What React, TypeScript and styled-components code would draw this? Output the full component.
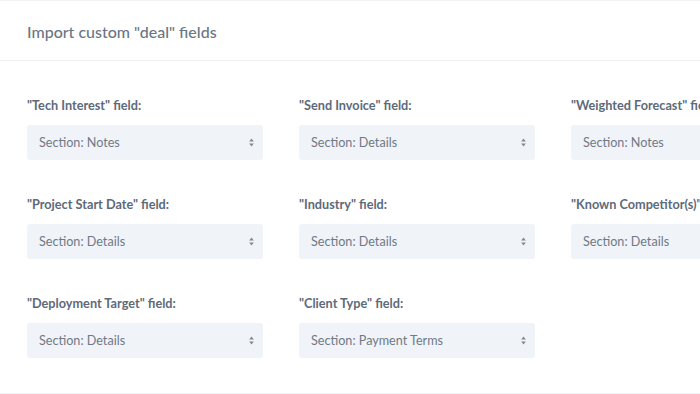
import styled, { createGlobalStyle } from 'styled-components'

const GlobalStyle = createGlobalStyle`
  html, body {
    margin: 0;
    padding: 0;
    background: #ffffff;
    overflow: hidden;
  }
  body {
    font-family: Lato, "Open Sans", "Liberation Sans", sans-serif;
    -webkit-font-smoothing: antialiased;
  }
`

const Page = styled.div`
  width: 700px;
  height: 394px;
  box-sizing: border-box;
  border-top: 1px solid #f1f2f4;
  border-bottom: 1px solid #f1f2f4;
  overflow: hidden;
  display: flex;
  flex-direction: column;
`

const Header = styled.header`
  height: 60px;
  box-sizing: border-box;
  display: flex;
  align-items: center;
  padding: 1px 27px 0;
  border-bottom: 1px solid #eef0f3;
`

const Title = styled.h1`
  margin: 0;
  font-size: 16px;
  font-weight: 500;
  color: #6b7685;
`

const Body = styled.div`
  padding: 36px 27px 0;
  display: grid;
  grid-template-columns: repeat(3, 236px);
  column-gap: 36px;
  row-gap: 36px;
`

const Field = styled.div`
  display: flex;
  flex-direction: column;
  gap: 12px;
  min-width: 0;
`

const Label = styled.label`
  font-size: 12.7px;
  font-weight: 700;
  line-height: 16px;
  color: #5e6a79;
  white-space: nowrap;
`

const Select = styled.div`
  height: 35px;
  box-sizing: border-box;
  background: #f0f3f7;
  border-radius: 3px;
  display: flex;
  align-items: center;
  justify-content: space-between;
  padding: 0 9px 0 12px;
  font-size: 12.6px;
  color: #6f7a88;
  white-space: nowrap;
`

const Arrows = styled.svg`
  width: 5px;
  height: 9px;
  flex: none;
`

type FieldDef = { name: string; section: string }

const fields: FieldDef[] = [
  { name: 'Tech Interest', section: 'Notes' },
  { name: 'Send Invoice', section: 'Details' },
  { name: 'Weighted Forecast', section: 'Notes' },
  { name: 'Project Start Date', section: 'Details' },
  { name: 'Industry', section: 'Details' },
  { name: 'Known Competitor(s)', section: 'Details' },
  { name: 'Deployment Target', section: 'Details' },
  { name: 'Client Type', section: 'Payment Terms' },
]

function SelectArrows() {
  return (
    <Arrows viewBox="0 0 5 9">
      <path d="M2.5 0.5 L4.8 3.6 L0.2 3.6 Z" fill="#7d8794" />
      <path d="M2.5 8.5 L4.8 5.4 L0.2 5.4 Z" fill="#7d8794" />
    </Arrows>
  )
}

export default function App() {
  return (
    <>
      <GlobalStyle />
      <Page>
        <Header>
          <Title>Import custom "deal" fields</Title>
        </Header>
        <Body>
          {fields.map((f) => (
            <Field key={f.name}>
              <Label>"{f.name}" field:</Label>
              <Select>
                <span>Section: {f.section}</span>
                <SelectArrows />
              </Select>
            </Field>
          ))}
        </Body>
      </Page>
    </>
  )
}
